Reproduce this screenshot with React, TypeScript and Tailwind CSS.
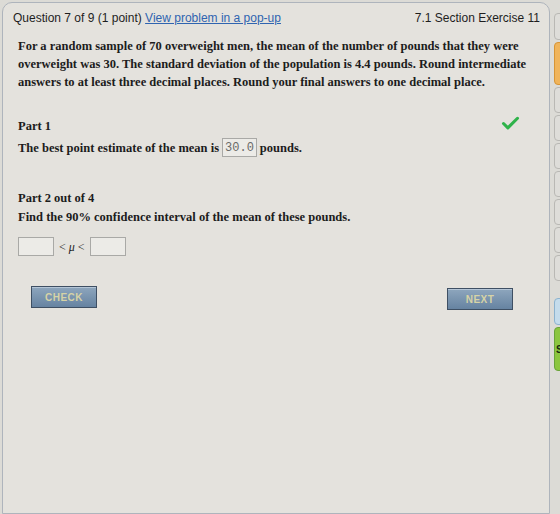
import { Check } from 'lucide-react';

const serif = { fontFamily: '"Liberation Serif", "Times New Roman", serif' };

// small answer box, shows a value or stays empty
const AnswerBox = ({ value, className = '' }: { value?: string; className?: string }) => (
  <span
    className={`inline-flex h-[19px] items-center border border-[#a9a9a6] bg-[#ecebe7] px-[2px] text-[12px] font-normal tracking-[0px] text-[#6a6a68] ${className}`}
    style={{ fontFamily: '"Liberation Mono", "Courier New", monospace' }}
  >
    {value}
  </span>
);

// the glossy blue buttons at the bottom of the question
const BlueButton = ({ label }: { label: string }) => (
  <button className="flex h-[22px] w-[66px] items-center justify-center border border-[#3e4f63] bg-gradient-to-b from-[#8ea6bd] to-[#6683a1] text-[10px] font-bold tracking-[0.5px] text-[#d6d3a6] shadow-[inset_0_1px_0_#b4c5d6]"
    style={{ fontFamily: '"Liberation Sans", Arial, sans-serif' }}>
    {label}
  </button>
);

const tabs = [
  { h: 'h-[27px]', c: 'bg-[#deddd9] border-[#b9b8b4]' },
  { h: 'h-[43px]', c: 'bg-[#f0b45a] border-[#d79535]' },
  { h: 'h-[26px]', c: 'bg-[#deddd9] border-[#b9b8b4]' },
  { h: 'h-[26px]', c: 'bg-[#deddd9] border-[#b9b8b4]' },
  { h: 'h-[26px]', c: 'bg-[#deddd9] border-[#b9b8b4]' },
  { h: 'h-[26px]', c: 'bg-[#deddd9] border-[#b9b8b4]' },
  { h: 'h-[26px]', c: 'bg-[#deddd9] border-[#b9b8b4]' },
  { h: 'h-[26px]', c: 'bg-[#deddd9] border-[#b9b8b4]' },
  { h: 'h-[26px]', c: 'bg-[#deddd9] border-[#b9b8b4]' },
];

export default function App() {
  return (
    <div className="flex h-[514px] w-[560px] overflow-hidden bg-[#dcdbd6]">
      {/* question panel */}
      <div className="ml-[2px] mt-[2px] flex w-[548px] shrink-0 flex-col rounded-tl-[10px] rounded-tr-[10px] border border-[#aeb4bc] bg-[#e4e2dd]">
        <div className="flex items-center justify-between pl-[10px] pr-[9px] pt-[6px] text-[12px] text-[#1e1e1e]"
          style={{ fontFamily: '"Liberation Sans", Arial, sans-serif' }}>
          <span>
            Question 7 of 9 (1 point){' '}
            <span className="text-[#2f64b0] underline">View problem in a pop-up</span>
          </span>
          <span>7.1 Section Exercise 11</span>
        </div>

        <div className="px-[15px] text-[12.5px] font-bold text-[#1c1c1c]" style={serif}>
          <p className="mt-[10px] leading-[18px]">
            For a random sample of 70 overweight men, the mean of the number of pounds that they were
            overweight was 30. The standard deviation of the population is 4.4 pounds. Round intermediate
            answers to at least three decimal places. Round your final answers to one decimal place.
          </p>

          <div className="mt-[26px] flex items-start justify-between">
            <div>
              <div className="leading-[18px]">Part 1</div>
              <div className="mt-[3px] flex items-center gap-[3px] leading-[18px]">
                The best point estimate of the mean is
                <AnswerBox value="30.0" />
                pounds.
              </div>
            </div>
            <Check className="mr-[13px] mt-[-4px] h-[21px] w-[21px] text-[#2fb34a]" strokeWidth={3.5} />
          </div>

          <div className="mt-[32px] leading-[18px]">Part 2 out of 4</div>
          <div className="mt-[1px] leading-[18px]">Find the 90% confidence interval of the mean of these pounds.</div>

          <div className="mt-[11px] flex items-center gap-[5px] font-normal">
            <AnswerBox className="w-[36px]" />
            <span className="text-[12px]">&lt; <i>μ</i> &lt;</span>
            <AnswerBox className="w-[36px]" />
          </div>

          <div className="mt-[30px] flex justify-between pl-[13px] pr-[21px]">
            <BlueButton label="CHECK" />
            <div className="mt-[2px]"><BlueButton label="NEXT" /></div>
          </div>
        </div>
      </div>

      {/* side tabs, mostly cut off by the window edge */}
      <div className="ml-[4px] flex shrink-0 flex-col gap-[2px] pt-[13px]">
        {tabs.map((t, i) => (
          <div key={i} className={`w-[14px] rounded-[4px] border ${t.h} ${t.c}`} />
        ))}
        <div className="mt-[15px] h-[27px] w-[14px] rounded-[4px] border border-[#8cb3cf] bg-[#c4dcec]" />
        <div className="flex h-[44px] w-[14px] items-center rounded-[4px] border border-[#6aa33a] bg-[#8cc63f] pl-[1px] text-[10px] font-bold text-[#1a2a10]"
          style={{ fontFamily: '"Liberation Sans", Arial, sans-serif' }}>
          S
        </div>
      </div>
    </div>
  );
}
